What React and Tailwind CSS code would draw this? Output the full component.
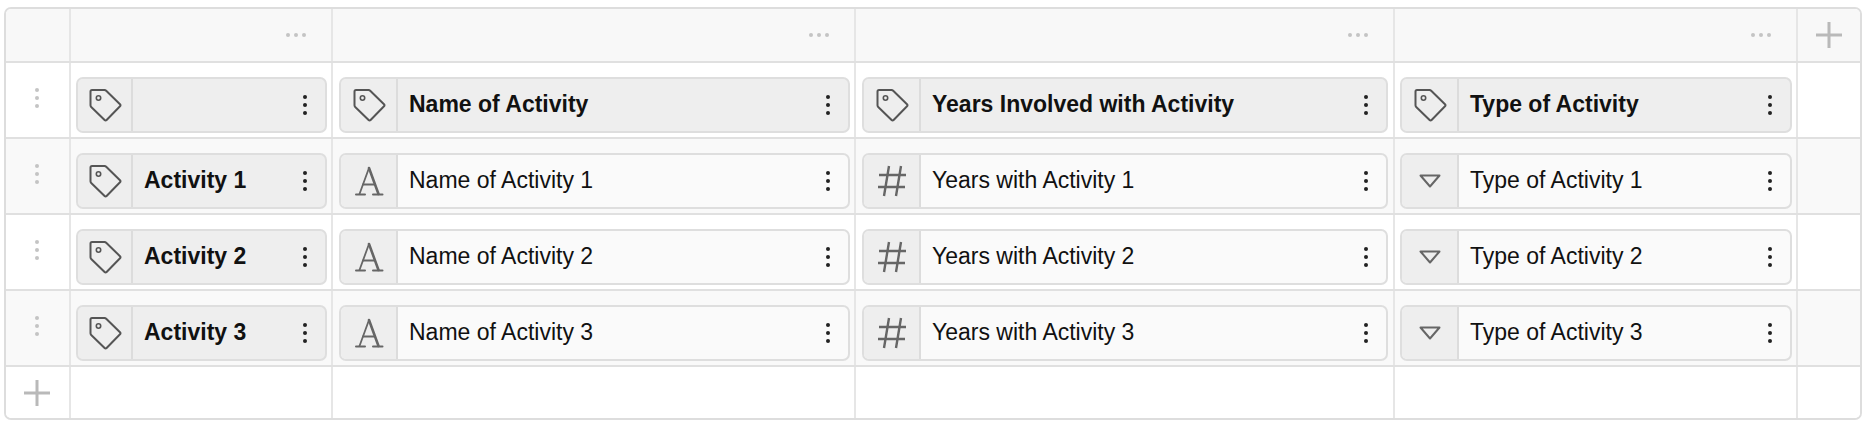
import React from "react";

const columns = "grid grid-cols-[65px_262px_523px_539px_403px_62px]";
const cellLine = "border-r-2 border-[#e6e6e6]";

// chip margins and icon panel width differ a little per column
const chipLayout = [
  { margin: "ml-[5px] mr-[4px]", panel: "w-[55px]" },
  { margin: "ml-[6px] mr-[4px]", panel: "w-[57px]" },
  { margin: "ml-[6px] mr-[5px]", panel: "w-[57px]" },
  { margin: "ml-[5px] mr-[4px]", panel: "w-[57px]" },
];

const rows = [
  {
    id: "head",
    bg: "bg-white",
    chips: [
      { icon: "tag", label: "", strong: true },
      { icon: "tag", label: "Name of Activity", strong: true },
      { icon: "tag", label: "Years Involved with Activity", strong: true },
      { icon: "tag", label: "Type of Activity", strong: true },
    ],
  },
  ...[1, 2, 3].map((n) => ({
    id: n,
    bg: n === 2 ? "bg-white" : "bg-[#f9f9f9]",
    chips: [
      { icon: "tag", label: `Activity ${n}`, strong: true },
      { icon: "text", label: `Name of Activity ${n}` },
      { icon: "hash", label: `Years with Activity ${n}` },
      { icon: "select", label: `Type of Activity ${n}` },
    ],
  })),
];

const TagIcon = () => (
  <svg width="34" height="34" viewBox="0 0 34 34" fill="none" stroke="#555" strokeWidth="2" strokeLinejoin="round">
    <path d="M2.5 3.5Q2.5 2 4 2H16.5Q17.5 2 18.2 2.7L32 16.2Q33 17.2 32 18.2L18.6 32Q17.6 33 16.6 32L3.2 19Q2.5 18.3 2.5 17.3Z" />
    <circle cx="10.5" cy="10" r="2.2" strokeWidth="1.6" />
  </svg>
);

const TextIcon = () => (
  <svg width="30" height="30" viewBox="0 0 30 30" fill="none" stroke="#666" strokeLinecap="round">
    <path d="M15 2L5.5 28" strokeWidth="1.8" />
    <path d="M15 2L24.5 28" strokeWidth="2.6" />
    <path d="M9 18.5H21" strokeWidth="1.8" />
    <path d="M2 28.5H11M19 28.5H28.5" strokeWidth="2" />
  </svg>
);

const HashIcon = () => (
  <svg width="30" height="32" viewBox="0 0 30 32" fill="none" stroke="#666" strokeWidth="2.4">
    <path d="M12 1L7 31M24 1L19 31M2 10H29M1 22H28" />
  </svg>
);

const SelectIcon = () => (
  <svg width="22" height="14" viewBox="0 0 22 14" fill="none" stroke="#666" strokeWidth="2" strokeLinejoin="round">
    <path d="M1.5 1.5H20.5L11 12.5Z" />
  </svg>
);

const icons = { tag: TagIcon, text: TextIcon, hash: HashIcon, select: SelectIcon };

const Kebab = () => (
  <div className="mr-[18px] flex shrink-0 flex-col gap-[4px]">
    <span className="size-[4px] rounded-full bg-[#222]" />
    <span className="size-[4px] rounded-full bg-[#222]" />
    <span className="size-[4px] rounded-full bg-[#222]" />
  </div>
);

const FieldChip = ({ icon, label, strong, layout }) => {
  const Icon = icons[icon];
  return (
    <div
      className={`${layout.margin} mt-[14px] flex h-[56px] overflow-hidden rounded-[7px] border-2 border-[#dedede] ${
        strong ? "bg-[#eeeeee]" : "bg-[#fafafa]"
      }`}
    >
      <div className={`${layout.panel} flex shrink-0 items-center justify-center border-r-2 border-[#dcdcdc] bg-[#eeeeee]`}>
        <Icon />
      </div>
      <div
        className={`min-w-0 flex-1 pb-[2px] pl-[11px] text-[23px] leading-[50px] text-[#111] ${
          strong ? "font-bold" : "font-normal"
        }`}
      >
        {label}
      </div>
      <div className="flex items-center">
        <Kebab />
      </div>
    </div>
  );
};

const Plus = () => (
  <svg width="26" height="26" viewBox="0 0 26 26" stroke="#b9b9b9" strokeWidth="3">
    <path d="M13 0V26M0 13H26" />
  </svg>
);

export default function App() {
  return (
    <div className="bg-white pl-[4px] pt-[7px] font-['Liberation_Sans',Arial,sans-serif]">
      <div className="w-[1858px] overflow-hidden rounded-[7px] border-2 border-[#dddddd]">
        {/* Column header strip */}
        <div className={`${columns} h-[54px] border-b-2 border-[#e0e0e0] bg-[#f8f8f8]`}>
          <div className={cellLine} />
          {[0, 1, 2, 3].map((i) => (
            <div key={i} className={`${cellLine} flex items-center justify-end gap-[4px] pr-[25px]`}>
              <span className="size-[4px] rounded-full bg-[#c4c4c4]" />
              <span className="size-[4px] rounded-full bg-[#c4c4c4]" />
              <span className="size-[4px] rounded-full bg-[#c4c4c4]" />
            </div>
          ))}
          <div className="flex items-center justify-center">
            <Plus />
          </div>
        </div>

        {/* Field rows */}
        {rows.map((row) => (
          <div key={row.id} className={`${columns} h-[76px] border-b-2 border-[#e0e0e0] ${row.bg}`}>
            <div className={`${cellLine} flex flex-col items-center gap-[4px] pr-[1px] pt-[25px]`}>
              <span className="size-[4px] rounded-full bg-[#c4c4c4]" />
              <span className="size-[4px] rounded-full bg-[#c4c4c4]" />
              <span className="size-[4px] rounded-full bg-[#c4c4c4]" />
            </div>
            {row.chips.map((chip, i) => (
              <div key={i} className={cellLine}>
                <FieldChip {...chip} layout={chipLayout[i]} />
              </div>
            ))}
            <div />
          </div>
        ))}

        {/* Add row */}
        <div className={`${columns} h-[51px] bg-white`}>
          <div className={`${cellLine} flex items-center justify-center pr-[1px]`}>
            <Plus />
          </div>
          <div className={cellLine} />
          <div className={cellLine} />
          <div className={cellLine} />
          <div className={cellLine} />
          <div />
        </div>
      </div>
    </div>
  );
}
